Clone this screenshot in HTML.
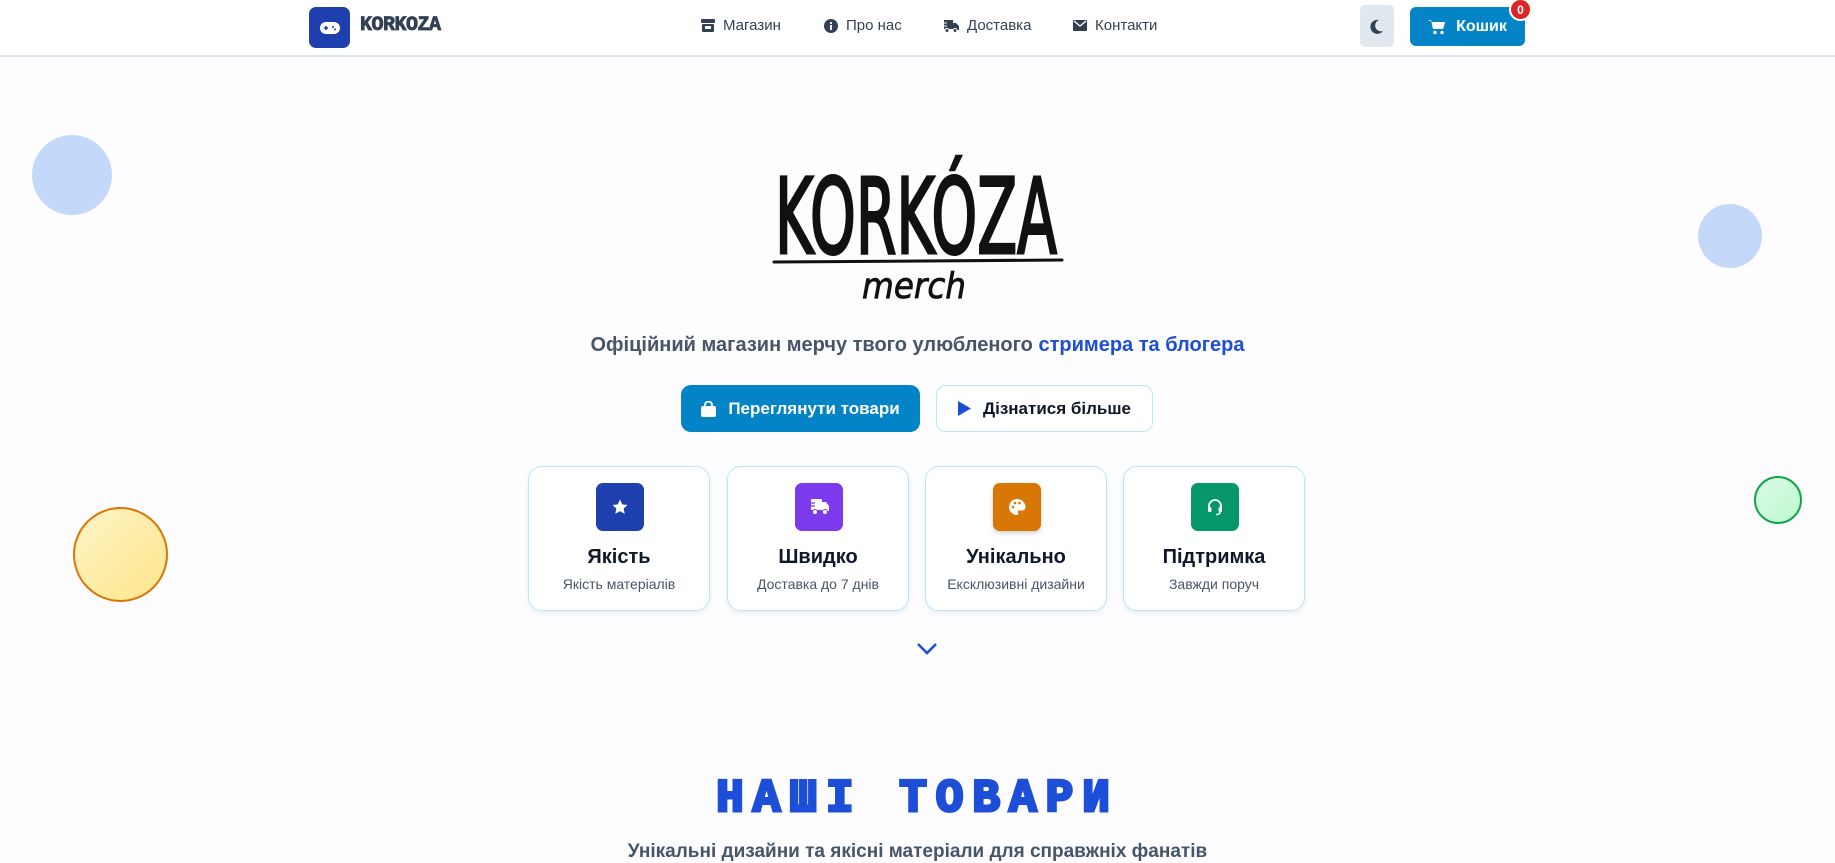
<!DOCTYPE html>
<html><head><meta charset="utf-8">
<style>
*{margin:0;padding:0;box-sizing:border-box}
body{width:1835px;height:860px;overflow:hidden;font-family:"Liberation Sans",sans-serif;background:#fdfcfe;position:relative}
.nav{position:absolute;left:0;top:0;width:1835px;height:57px;background:#fff;border-bottom:2px solid #dbe3ee}
.abs{position:absolute}
.navlink{position:absolute;top:17px;font-size:15px;color:#334155;display:flex;align-items:center;gap:8px}
.circle{position:absolute;border-radius:50%}
.btn{position:absolute;display:flex;align-items:center;justify-content:center;gap:12px;font-weight:bold;font-size:17px;border-radius:10px}
.card{position:absolute;top:466px;width:182px;height:145px;background:#fff;border:1.5px solid #bae6fd;border-radius:14px;box-shadow:0 3px 6px rgba(0,0,0,.06);text-align:center}
.card .ic{position:absolute;left:67px;top:16px;width:48px;height:48px;border-radius:7px;display:flex;align-items:center;justify-content:center}
.card .t{position:absolute;top:79px;width:100%;font-size:20px;font-weight:bold;color:#0f172a}
.card .s{position:absolute;top:109px;width:100%;font-size:14px;color:#475569}
</style></head><body>
<div class="circle" style="left:32px;top:135px;width:80px;height:80px;background:#c4d9fa"></div>
<div class="circle" style="left:73px;top:507px;width:95px;height:95px;background:linear-gradient(135deg,#fef3c7,#fde68a);border:2px solid #d97706"></div>
<div class="circle" style="left:1698px;top:204px;width:64px;height:64px;background:#c4d9fa"></div>
<div class="circle" style="left:1754px;top:476px;width:48px;height:48px;background:linear-gradient(135deg,#dcfce7,#bbf7d0);border:2px solid #16a34a"></div>

<div class="nav">
 <div class="abs" style="left:309px;top:7px;width:41px;height:41px;background:#1e40af;border-radius:7px;display:flex;align-items:center;justify-content:center">
  <svg width="22" height="16" viewBox="0 0 22 16"><rect x="1" y="2" width="20" height="12" rx="6" fill="#fff"/><path d="M5 8h4M7 6v4" stroke="#1e40af" stroke-width="1.6"/><circle cx="14" cy="7" r="1" fill="#1e40af"/><circle cx="16" cy="9.5" r="1" fill="#1e40af"/></svg>
 </div>
 <div class="abs" style="left:360px;top:14px;font-family:'Liberation Mono',monospace;font-weight:bold;font-size:20px;color:#334155;letter-spacing:-0.5px;-webkit-text-stroke:0.8px #334155">KORKOZA</div>
 <div class="navlink" style="left:701px"><svg width="14" height="13" viewBox="0 0 14 13"><rect x="0" y="0" width="14" height="4" rx="1" fill="#334155"/><rect x="1" y="5" width="12" height="8" rx="1" fill="#334155"/><rect x="4" y="7" width="6" height="3" fill="#fff"/></svg>Магазин</div>
 <div class="navlink" style="left:824px"><svg width="14" height="14" viewBox="0 0 14 14"><circle cx="7" cy="7" r="7" fill="#334155"/><rect x="6" y="6" width="2" height="5" fill="#fff"/><circle cx="7" cy="4" r="1.1" fill="#fff"/></svg>Про нас</div>
 <div class="navlink" style="left:942px"><svg width="17" height="14" viewBox="0 0 17 14"><rect x="2" y="1" width="9" height="9" fill="#334155"/><path d="M11 4h3l3 3v4h-6z" fill="#334155"/><circle cx="5" cy="11.5" r="2" fill="#334155" stroke="#fff"/><circle cx="13" cy="11.5" r="2" fill="#334155" stroke="#fff"/><path d="M0 4h5M0 7h5" stroke="#fff"/></svg>Доставка</div>
 <div class="navlink" style="left:1073px"><svg width="14" height="11" viewBox="0 0 14 11"><rect width="14" height="11" rx="1" fill="#334155"/><path d="M1 1l6 5 6-5" stroke="#fff" fill="none" stroke-width="1.3"/></svg>Контакти</div>
 <div class="abs" style="left:1360px;top:5px;width:34px;height:42px;background:#e2e8f0;border-radius:5px;display:flex;align-items:center;justify-content:center">
  <svg width="14" height="15" viewBox="0 0 14 15"><path d="M9 1A7 7 0 1 0 13 12A5.5 5.5 0 0 1 9 1z" fill="#334155"/></svg>
 </div>
 <div class="abs" style="left:1410px;top:7px;width:115px;height:39px;background:#0284c7;border-radius:6px;display:flex;align-items:center;justify-content:center;gap:10px;color:#fff;font-weight:bold;font-size:16px">
  <svg width="18" height="16" viewBox="0 0 18 16"><path d="M0 1h3l2 9h10l2-7H4" fill="#fff"/><path d="M4 3h13l-2 7H5z" fill="#fff"/><circle cx="7" cy="13.5" r="1.7" fill="#fff"/><circle cx="14" cy="13.5" r="1.7" fill="#fff"/></svg>Кошик
 </div>
 <div class="abs" style="left:1509px;top:-2px;width:23px;height:23px;border-radius:50%;background:#dc2626;border:2px solid #fff;color:#fff;font-weight:bold;font-size:12px;display:flex;align-items:center;justify-content:center">0</div>
</div>

<svg class="abs" style="left:0;top:0" width="1835" height="320">
 <text x="775" y="253" font-family="DejaVu Sans, sans-serif" font-size="104" textLength="282" lengthAdjust="spacingAndGlyphs" fill="#111" stroke="#111" stroke-width="3">KORKÓZA</text>
 <path d="M774 262 L1062 260" stroke="#111" stroke-width="3" stroke-linecap="round"/>
 <text x="862" y="298" font-family="DejaVu Sans, sans-serif" font-style="italic" font-size="36" textLength="104" lengthAdjust="spacingAndGlyphs" fill="#111" stroke="#111" stroke-width="0.8">merch</text>
</svg>

<div class="abs" style="left:0;top:334px;width:1835px;text-align:center;font-size:20px;font-weight:bold;color:#475569">Офіційний магазин мерчу твого улюбленого <span style="color:#1d4ed8">стримера та блогера</span></div>

<div class="btn" style="left:681px;top:385px;width:239px;height:47px;background:#0284c7;color:#fff"><svg width="15" height="16" viewBox="0 0 15 16"><path d="M4 6V4a3.5 3.5 0 0 1 7 0v2" stroke="#fff" stroke-width="1.8" fill="none"/><rect x="0" y="5" width="15" height="11" rx="2" fill="#fff"/></svg>Переглянути товари</div>
<div class="btn" style="left:936px;top:385px;width:217px;height:47px;background:#fff;border:1.5px solid #bae6fd;color:#0f172a"><svg width="13" height="15" viewBox="0 0 13 15"><path d="M0 0l13 7.5L0 15z" fill="#1d4ed8"/></svg>Дізнатися більше</div>

<div class="card" style="left:528px"><div class="ic" style="background:#1e40af"><svg width="18" height="18" viewBox="0 0 24 24"><path d="M12 2l3 6.5 7 .8-5.2 4.8 1.5 7L12 17.6 5.7 21l1.5-7L2 9.3l7-.8z" fill="#fff"/></svg></div><div class="t">Якість</div><div class="s">Якість матеріалів</div></div>
<div class="card" style="left:727px"><div class="ic" style="background:#7c3aed"><svg width="22" height="18" viewBox="0 0 22 18"><rect x="3" y="1" width="11" height="11" rx="1" fill="#fff"/><path d="M14 4h4l3 4v5h-7z" fill="#fff"/><circle cx="7" cy="14" r="2.5" fill="#fff" stroke="#7c3aed"/><circle cx="17" cy="14" r="2.5" fill="#fff" stroke="#7c3aed"/><path d="M0 5h7M1 8h6" stroke="#7c3aed" stroke-width="1.2"/></svg></div><div class="t">Швидко</div><div class="s">Доставка до 7 днів</div></div>
<div class="card" style="left:925px"><div class="ic" style="background:#d97706;box-shadow:0 2px 5px rgba(0,0,0,.2)"><svg width="18" height="18" viewBox="0 0 18 18"><path d="M9 1a8 8 0 0 0 0 16c1.5 0 1.5-1.5 1-2.5s0-2 1.5-2H14a3.5 3.5 0 0 0 3.5-3.5C17.5 4.5 13.5 1 9 1z" fill="#fff"/><circle cx="5" cy="9" r="1.3" fill="#d97706"/><circle cx="7" cy="5" r="1.3" fill="#d97706"/><circle cx="11.5" cy="5" r="1.3" fill="#d97706"/></svg></div><div class="t">Унікально</div><div class="s">Ексклюзивні дизайни</div></div>
<div class="card" style="left:1123px"><div class="ic" style="background:#059669"><svg width="18" height="18" viewBox="0 0 18 18"><path d="M3 10V8a6 6 0 0 1 12 0v2" stroke="#fff" stroke-width="1.8" fill="none"/><rect x="2" y="9" width="3.5" height="5" rx="1.5" fill="#fff"/><rect x="12.5" y="9" width="3.5" height="5" rx="1.5" fill="#fff"/><path d="M14 14c0 2-2 2.5-4 2.5" stroke="#fff" stroke-width="1.5" fill="none"/></svg></div><div class="t">Підтримка</div><div class="s">Завжди поруч</div></div>

<svg class="abs" style="left:916px;top:642px" width="22" height="14" viewBox="0 0 22 14"><path d="M2 2l9 9 9-9" stroke="#1d4ed8" stroke-width="2.6" fill="none"/></svg>

<div class="abs" style="left:0;top:776px;width:1835px;text-align:center;font-family:'Liberation Mono',monospace;font-weight:bold;font-size:46px;color:#1d4ed8;letter-spacing:9px;line-height:46px;-webkit-text-stroke:3px #1d4ed8">НАШІ ТОВАРИ</div>
<div class="abs" style="left:0;top:841px;width:1835px;text-align:center;font-size:19px;font-weight:bold;color:#475569">Унікальні дизайни та якісні матеріали для справжніх фанатів</div>
</body></html>
